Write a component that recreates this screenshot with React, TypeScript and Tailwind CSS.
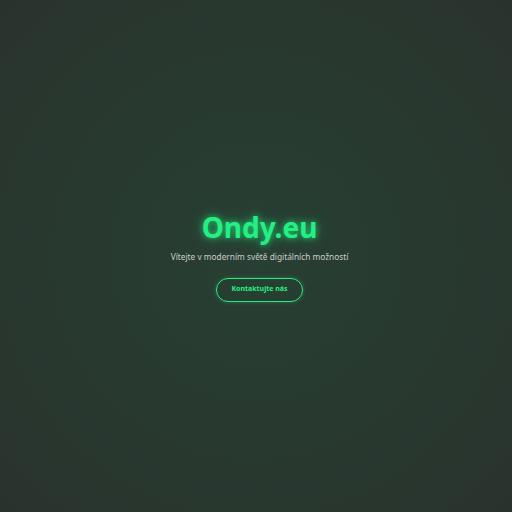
import React from 'react';

const App: React.FC = () => {
    return (
        <div className="h-screen w-full flex items-center justify-center pl-[7px] bg-[radial-gradient(circle_at_center,#283f33_0%,#283a30_45%,#29332d_100%)] font-['Noto_Sans',sans-serif]">
            <div className="flex flex-col items-center">
                <h1 className="text-[28px] leading-[34px] font-bold text-[#22f083] [text-shadow:0_0_6px_rgba(34,240,131,0.7),0_0_14px_rgba(34,240,131,0.4)]">
                    Ondy.eu
                </h1>
                <p className="mt-[7px] text-[8.3px] text-[#c9cfcb]">
                    Vítejte v moderním světě digitálních možností
                </p>
                <button className="mt-[14px] h-[24px] px-[14px] rounded-full border border-[#22f083] text-[#22f083] text-[7px] font-bold shadow-[0_0_4px_rgba(34,240,131,0.3)]">
                    Kontaktujte nás
                </button>
            </div>
        </div>
    );
};

export default App;
